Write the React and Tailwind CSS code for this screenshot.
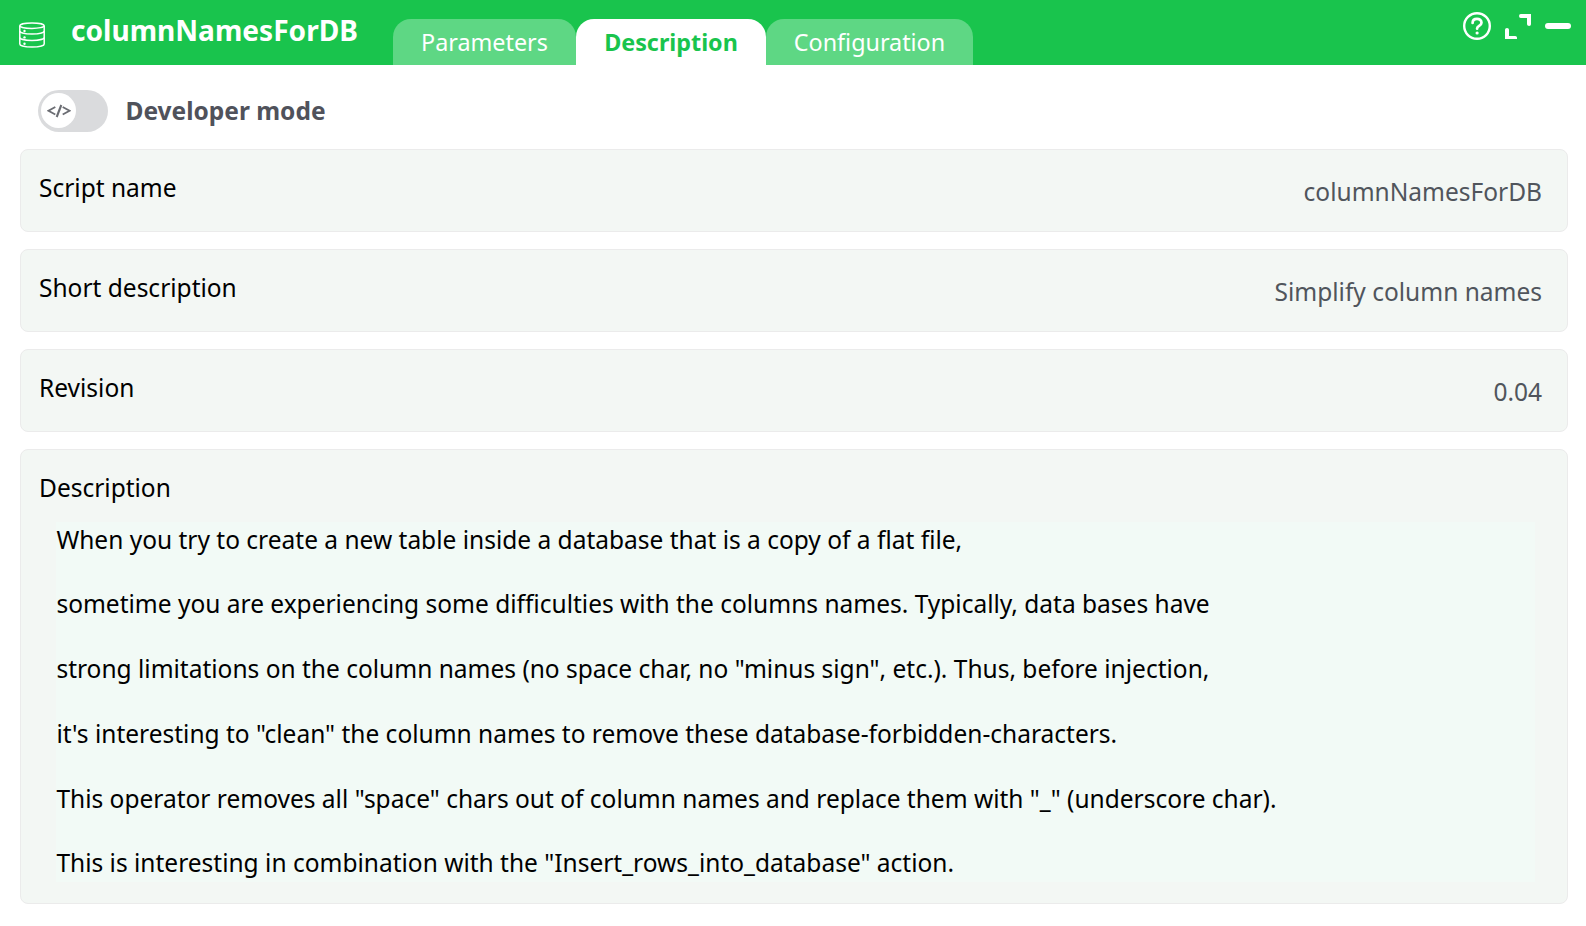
const tabs = [
  { label: 'Parameters', width: 'w-[183px]' },
  { label: 'Description', width: 'w-[190px]', active: true },
  { label: 'Configuration', width: 'w-[207px]' },
];

const fields = [
  { label: 'Script name', value: 'columnNamesForDB' },
  { label: 'Short description', value: 'Simplify column names' },
  { label: 'Revision', value: '0.04' },
];

const lines = [
  'When you try to create a new table inside a database that is a copy of a flat file,',
  'sometime you are experiencing some difficulties with the columns names. Typically, data bases have',
  'strong limitations on the column names (no space char, no "minus sign", etc.). Thus, before injection,',
  'it\'s interesting to "clean" the column names to remove these database-forbidden-characters.',
  'This operator removes all "space" chars out of column names and replace them with "_" (underscore char).',
  'This is interesting in combination with the "Insert_rows_into_database" action.',
];

function DatabaseIcon() {
  return (
    <svg className="mt-[22px] ml-[19px] h-[26px] w-[26px] shrink-0" viewBox="0 0 26 26" fill="none" stroke="#fff" strokeWidth="1.5">
      <ellipse cx="13" cy="3.7" rx="12.2" ry="2.7" />
      <path d="M.8 3.7v18.4c0 1.7 5.4 3 12.2 3s12.2-1.3 12.2-3V3.7" />
      <path d="M.8 9c0 1.7 5.4 3 12.2 3s12.2-1.3 12.2-3M.8 15.4c0 1.7 5.4 3 12.2 3s12.2-1.3 12.2-3" />
      <g fill="#fff" stroke="none">
        <circle cx="5.5" cy="9" r="1.2" />
        <circle cx="5.5" cy="15.4" r="1.2" />
        <circle cx="5.5" cy="21.7" r="1.2" />
      </g>
    </svg>
  );
}

function HelpIcon() {
  return (
    <svg className="h-7 w-7" viewBox="0 0 28 28" fill="none" stroke="#fff" strokeLinecap="round">
      <circle cx="14" cy="14" r="12.8" strokeWidth="2.4" />
      <path d="M9.6 10.9c0-2.6 1.9-4.1 4.4-4.1s4.5 1.6 4.5 3.9c0 3-4.4 3.2-4.4 5.7v.3" strokeWidth="2.7" />
      <circle cx="14.1" cy="21" r="1.6" fill="#fff" stroke="none" />
    </svg>
  );
}

function ExpandIcon() {
  return (
    <svg className="h-[26px] w-[26px]" viewBox="0 0 26 26" fill="#fff">
      <path d="M15.8 0H26v10.3q0 1.7-1.9 1.7T22 10.3V4h-6.2Q14 4 14 2t1.8-2Z" />
      <path d="M0 15.8Q0 14 2 14t2 1.8V22h6.2q1.8 0 1.8 1.6V25H0Z" />
    </svg>
  );
}

export default function App() {
  return (
    <div className="h-[926px] w-full overflow-hidden bg-white font-['Noto_Sans',sans-serif] text-[24.5px] leading-[33px] text-black">
      <header className="flex h-[65px] bg-[#19c44d] text-white">
        <DatabaseIcon />
        <h1 className="ml-[26px] w-[322px] pt-[11px] text-[28.08px] leading-[38px] font-bold whitespace-nowrap">columnNamesForDB</h1>
        <nav className="flex pt-[19px] text-[23.33px] leading-[34px]">
          {tabs.map((t) => (
            <div
              key={t.label}
              className={`${t.width} h-[46px] rounded-t-[18px] pt-[6px] text-center ${t.active ? 'bg-white font-bold text-[#19c44d]' : 'bg-[#5ed784]'}`}
            >
              {t.label}
            </div>
          ))}
        </nav>
        <div className="ml-auto flex items-start pr-[15px]">
          <div className="mt-3"><HelpIcon /></div>
          <div className="mt-[14px] ml-[14px]"><ExpandIcon /></div>
          <div className="mt-[23px] ml-[14px] h-[6px] w-[26px] rounded-full bg-white" />
        </div>
      </header>

      <div className="flex h-[84px] items-start pt-[25px] pl-[38px]">
        <div className="h-[42px] w-[70px] rounded-full bg-[#dadbdd] p-[3px]">
          <div className="flex h-[35px] w-[35px] items-center justify-center rounded-full bg-white">
            <svg className="h-[14px] w-[24px]" viewBox="0 0 24 14" fill="none" stroke="#6b6d73" strokeWidth="1.8">
              <path d="M8.3 3 1.5 6.8l6.8 3.7M15.7 3l6.8 3.8-6.8 3.7" />
              <path d="M14.3 1 9.7 13" strokeWidth="2.1" />
            </svg>
          </div>
        </div>
        <span className="ml-[17.5px] pt-[4px] font-bold text-[#50525b]">Developer mode</span>
      </div>

      <main className="flex flex-col gap-[17px] pr-[18px] pl-5">
        {fields.map((f) => (
          <section key={f.label} className="flex h-[83px] justify-between rounded-lg border border-[#ebebeb] bg-[#f3f7f4] pr-[25px] pl-[18px]">
            <span className="pt-[21px]">{f.label}</span>
            <span className="pt-[25px] text-[#50555c]">{f.value}</span>
          </section>
        ))}
        <section className="h-[455px] rounded-lg border border-[#ebebeb] bg-[#f3f7f4] pr-8 pl-[35px]">
          <h2 className="-ml-[17px] pt-[21px]">Description</h2>
          <div className="mt-[18px] h-[360px] bg-[#f2faf6] pt-[0.6px] pl-[0.4px]">
            {lines.map((l) => (
              <p key={l} className="mb-[31.75px] whitespace-nowrap">{l}</p>
            ))}
          </div>
        </section>
      </main>
    </div>
  );
}
